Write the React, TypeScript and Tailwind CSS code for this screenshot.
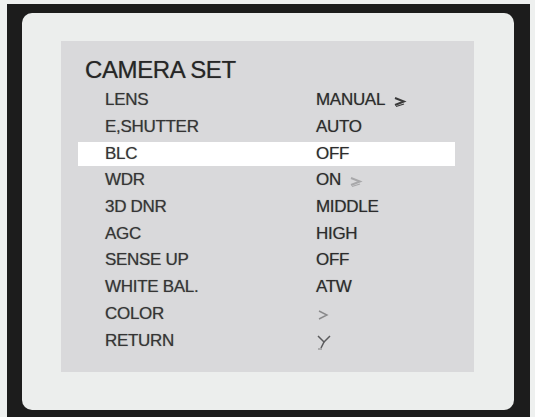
import React from 'react';

type Row = { label: string; value: string; mark?: 'enter' | 'enterLight' | 'arrow' | 'return'; active?: boolean };

const rows: Row[] = [
  { label: 'LENS', value: 'MANUAL', mark: 'enter' },
  { label: 'E,SHUTTER', value: 'AUTO' },
  { label: 'BLC', value: 'OFF', active: true },
  { label: 'WDR', value: 'ON', mark: 'enterLight' },
  { label: '3D DNR', value: 'MIDDLE' },
  { label: 'AGC', value: 'HIGH' },
  { label: 'SENSE UP', value: 'OFF' },
  { label: 'WHITE BAL.', value: 'ATW' },
  { label: 'COLOR', value: '', mark: 'arrow' },
  { label: 'RETURN', value: '', mark: 'return' },
];

// little OSD glyphs next to the values
const Mark: React.FC<{ kind: Row['mark'] }> = ({ kind }) => {
  if (kind === 'enter' || kind === 'enterLight') {
    const c = kind === 'enter' ? '#3a3a3a' : '#a8a8aa';
    return (
      <svg width="14" height="12" viewBox="0 0 14 12" className="ml-[8px] mt-[3px]">
        <path d="M2 2 L11 5.5 L2 9" fill="none" stroke={c} strokeWidth="1.9" />
        <path d="M3 10.5 L11 8" fill="none" stroke={c} strokeWidth="1.3" />
      </svg>
    );
  }
  if (kind === 'arrow') {
    return (
      <svg width="14" height="12" viewBox="0 0 14 12" className="mt-[3px]">
        <path d="M3 2 L11 6 L3 10" fill="none" stroke="#8a8a8c" strokeWidth="1.4" />
      </svg>
    );
  }
  if (kind === 'return') {
    return (
      <svg width="18" height="18" viewBox="0 0 18 18" className="mt-[2px]">
        <path d="M2 3 L8 9 L14 3" fill="none" stroke="#5a5a5c" strokeWidth="1.5" />
        <path d="M8 9 L5 15" fill="none" stroke="#5a5a5c" strokeWidth="1.5" />
        <path d="M2 16 L6 16" fill="none" stroke="#8a8a8c" strokeWidth="1.2" />
      </svg>
    );
  }
  return null;
};

const App: React.FC = () => {
  return (
    <div
      className="w-[535px] h-[417px] bg-[#eef0ef] pt-[4px] pl-[7px] pr-[5px]"
      style={{ fontFamily: '"Liberation Sans", Arial, sans-serif' }}
    >
      <div className="h-[413px] bg-[#1c1c1c] pt-[9px] pl-[15px] pr-[16px] pb-[7px]">
        <div className="h-full bg-[#eceeed] rounded-[10px] pt-[28px] pl-[39px] pr-[40px] pb-[38px]">
          <div className="h-full bg-[#d9d9db] pt-[15px] pb-[19px] [text-shadow:0_0_1px_rgba(0,0,0,0.4)]">
            <div className="pl-[24px] text-[24px] leading-[28px] text-[#262626] tracking-[-0.4px]">
              CAMERA SET
            </div>
            <div className="mt-[3px] pl-[17px] pr-[19px]">
              {rows.map((r) => (
                <div key={r.label} className="h-[26.7px] flex items-center">
                  <div
                    className={
                      'h-[24px] w-full flex items-center text-[17px] leading-[24px] ' +
                      (r.active ? 'bg-white' : '')
                    }
                  >
                    <div className="w-[238px] pl-[27px] text-[#353535] tracking-[-0.3px]">{r.label}</div>
                    <div className="flex items-center text-[#2c2c2c] tracking-[-0.3px]">
                      {r.value}
                      {r.mark && <Mark kind={r.mark} />}
                    </div>
                  </div>
                </div>
              ))}
            </div>
          </div>
        </div>
      </div>
    </div>
  );
};

export default App;
